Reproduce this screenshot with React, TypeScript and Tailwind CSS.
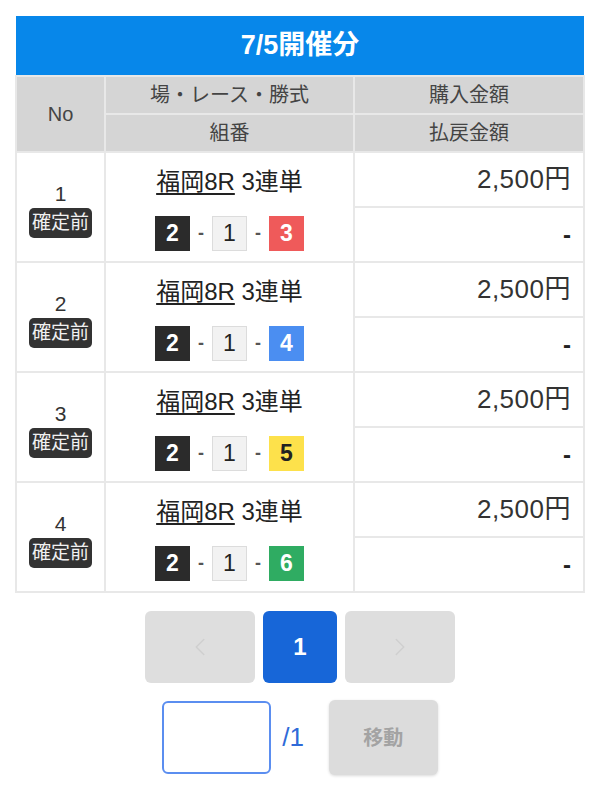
import { ChevronLeft, ChevronRight } from 'lucide-react';

const FONT = 'font-["Liberation_Sans","Noto_Sans_CJK_JP",sans-serif]';

const rows = [
  { no: 1, third: '3', color: 'bg-[#ef5a5a] text-white' },
  { no: 2, third: '4', color: 'bg-[#4b8ef1] text-white' },
  { no: 3, third: '5', color: 'bg-[#fde14b] text-[#222]' },
  { no: 4, third: '6', color: 'bg-[#2fac62] text-white' },
];

function Box({ label, className }: { label: string; className: string }) {
  return (
    <span className={`inline-flex h-[35px] w-[35px] items-center justify-center text-[23px] font-bold ${className}`}>
      {label}
    </span>
  );
}

export default function App() {
  const cell = 'border-2 border-[#e8e8e8]';

  return (
    <div className={`min-h-[800px] w-[600px] bg-white pt-4 ${FONT}`}>
      <table className="mx-auto w-[568px] table-fixed border-collapse">
        <colgroup>
          <col className="w-[89px]" />
          <col className="w-[249px]" />
          <col className="w-[230px]" />
        </colgroup>
        <thead>
          <tr>
            <th colSpan={3} className="h-[60px] bg-[#0787ea] text-center text-[27px] font-bold text-white">
              7/5開催分
            </th>
          </tr>
          <tr className="bg-[#d5d5d5] text-[20px] text-[#444]">
            <th rowSpan={2} className={`${cell} font-normal`}>No</th>
            <th className={`${cell} h-[38px] font-normal`}>場・レース・勝式</th>
            <th className={`${cell} h-[38px] font-normal`}>購入金額</th>
          </tr>
          <tr className="bg-[#d5d5d5] text-[20px] text-[#444]">
            <th className={`${cell} h-[38px] font-normal`}>組番</th>
            <th className={`${cell} h-[38px] font-normal`}>払戻金額</th>
          </tr>
        </thead>
        <tbody>
          {rows.map((r) => (
            <>
              <tr key={`a${r.no}`}>
                <td rowSpan={2} className={`${cell} text-center align-middle`}>
                  <div className="flex flex-col items-center pt-1">
                    <span className="text-[21px] leading-[26px] text-[#333]">{r.no}</span>
                    <span className="mt-[1px] rounded-[5px] bg-[#333] px-[3px] text-[19px] leading-[30px] text-[#f0f0f0]">
                      確定前
                    </span>
                  </div>
                </td>
                <td rowSpan={2} className={`${cell} text-center align-top`}>
                  <div className="pt-[14px] text-[24px] leading-[30px] text-[#222]">
                    <span className="underline underline-offset-[3px]">福岡8R</span> 3連単
                  </div>
                  <div className="mt-[19px] flex items-center justify-center gap-[8px] text-[18px] font-bold text-[#555]">
                    <Box label="2" className="bg-[#2b2b2b] text-white" />
                    <span>-</span>
                    <Box label="1" className="border border-[#dcdcdc] bg-[#f2f2f2] font-normal text-[#222]" />
                    <span>-</span>
                    <Box label={r.third} className={r.color} />
                  </div>
                </td>
                <td className={`${cell} h-[55px] pr-3 text-right text-[26px] tracking-[0.5px] text-[#333]`}>2,500円</td>
              </tr>
              <tr key={`b${r.no}`}>
                <td className={`${cell} h-[55px] pr-3 text-right text-[24px] font-bold text-[#222]`}>-</td>
              </tr>
            </>
          ))}
        </tbody>
      </table>

      <div className="mt-[18px] flex justify-center gap-2">
        <button className="flex h-[72px] w-[110px] items-center justify-center rounded-md bg-[#dedede] text-[#cfcfcf]">
          <ChevronLeft size={30} strokeWidth={1.2} />
        </button>
        <button className="flex h-[72px] w-[74px] items-center justify-center rounded-md bg-[#1766d8] text-[24px] font-bold text-white">
          1
        </button>
        <button className="flex h-[72px] w-[110px] items-center justify-center rounded-md bg-[#dedede] text-[#cfcfcf]">
          <ChevronRight size={30} strokeWidth={1.2} />
        </button>
      </div>

      <div className="mt-[17px] flex items-center justify-center">
        <input className="h-[73px] w-[109px] rounded-md border-2 border-[#5b8ef0] bg-white outline-none" />
        <span className="ml-[11px] text-[26px] text-[#2f6ad8]">/1</span>
        <button className="ml-[25px] flex h-[75px] w-[109px] items-center justify-center rounded-md bg-[#dcdcdc] text-[20px] font-bold text-[#a3a3a3] shadow-[0_1px_3px_rgba(0,0,0,0.15)]">
          移動
        </button>
      </div>
    </div>
  );
}
